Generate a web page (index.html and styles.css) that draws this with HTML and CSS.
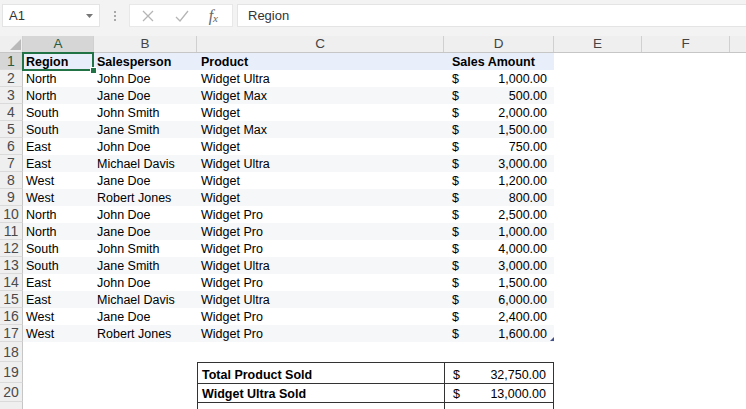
FILE: index.html
```html
<!DOCTYPE html>
<html>
<head>
<meta charset="utf-8">
<link rel="stylesheet" href="styles.css">
</head>
<body>
<div class="app">
  <div class="fbar">
    <div class="namebox"><span>A1</span>
      <svg class="caret" width="7" height="4" viewBox="0 0 7 4"><path d="M0 0h7L3.5 4z" fill="#777"/></svg>
    </div>
    <div class="grip"><i></i><i></i><i></i></div>
    <div class="fnbtns">
      <svg width="14" height="14" viewBox="0 0 14 14"><path d="M2 2l10 10M12 2L2 12" stroke="#b5b5b5" stroke-width="1.3" fill="none"/></svg>
      <svg width="16" height="14" viewBox="0 0 16 14"><path d="M2 8l4 4 8-10" stroke="#b5b5b5" stroke-width="1.3" fill="none"/></svg>
      <span class="fx">f<sub>x</sub></span>
    </div>
    <div class="formula">Region</div>
  </div>

  <div class="sheet">
    <div class="row hdr">
      <div class="corner"><svg width="11" height="11" viewBox="0 0 11 11"><path d="M11 0V11H0z" fill="#b9b9b9"/></svg></div>
      <div class="ch sel">A</div><div class="ch">B</div><div class="ch">C</div><div class="ch">D</div><div class="ch">E</div><div class="ch">F</div><div class="ch last"></div>
    </div>

    <div class="row head">
      <div class="rh sel">1</div>
      <div class="c b active">Region</div><div class="c b">Salesperson</div><div class="c c3 b">Product</div><div class="c d b"><span>Sales Amount</span></div>
    </div>
    <div class="row"><div class="rh">2</div><div class="c">North</div><div class="c">John Doe</div><div class="c c3">Widget Ultra</div><div class="c d"><span>$</span><span>1,000.00</span></div></div>
    <div class="row alt"><div class="rh">3</div><div class="c">North</div><div class="c">Jane Doe</div><div class="c c3">Widget Max</div><div class="c d"><span>$</span><span>500.00</span></div></div>
    <div class="row"><div class="rh">4</div><div class="c">South</div><div class="c">John Smith</div><div class="c c3">Widget</div><div class="c d"><span>$</span><span>2,000.00</span></div></div>
    <div class="row alt"><div class="rh">5</div><div class="c">South</div><div class="c">Jane Smith</div><div class="c c3">Widget Max</div><div class="c d"><span>$</span><span>1,500.00</span></div></div>
    <div class="row"><div class="rh">6</div><div class="c">East</div><div class="c">John Doe</div><div class="c c3">Widget</div><div class="c d"><span>$</span><span>750.00</span></div></div>
    <div class="row alt"><div class="rh">7</div><div class="c">East</div><div class="c">Michael Davis</div><div class="c c3">Widget Ultra</div><div class="c d"><span>$</span><span>3,000.00</span></div></div>
    <div class="row"><div class="rh">8</div><div class="c">West</div><div class="c">Jane Doe</div><div class="c c3">Widget</div><div class="c d"><span>$</span><span>1,200.00</span></div></div>
    <div class="row alt"><div class="rh">9</div><div class="c">West</div><div class="c">Robert Jones</div><div class="c c3">Widget</div><div class="c d"><span>$</span><span>800.00</span></div></div>
    <div class="row"><div class="rh">10</div><div class="c">North</div><div class="c">John Doe</div><div class="c c3">Widget Pro</div><div class="c d"><span>$</span><span>2,500.00</span></div></div>
    <div class="row alt"><div class="rh">11</div><div class="c">North</div><div class="c">Jane Doe</div><div class="c c3">Widget Pro</div><div class="c d"><span>$</span><span>1,000.00</span></div></div>
    <div class="row"><div class="rh">12</div><div class="c">South</div><div class="c">John Smith</div><div class="c c3">Widget Pro</div><div class="c d"><span>$</span><span>4,000.00</span></div></div>
    <div class="row alt"><div class="rh">13</div><div class="c">South</div><div class="c">Jane Smith</div><div class="c c3">Widget Ultra</div><div class="c d"><span>$</span><span>3,000.00</span></div></div>
    <div class="row"><div class="rh">14</div><div class="c">East</div><div class="c">John Doe</div><div class="c c3">Widget Pro</div><div class="c d"><span>$</span><span>1,500.00</span></div></div>
    <div class="row alt"><div class="rh">15</div><div class="c">East</div><div class="c">Michael Davis</div><div class="c c3">Widget Ultra</div><div class="c d"><span>$</span><span>6,000.00</span></div></div>
    <div class="row"><div class="rh">16</div><div class="c">West</div><div class="c">Jane Doe</div><div class="c c3">Widget Pro</div><div class="c d"><span>$</span><span>2,400.00</span></div></div>
    <div class="row alt"><div class="rh">17</div><div class="c">West</div><div class="c">Robert Jones</div><div class="c c3">Widget Pro</div><div class="c d qa"><span>$</span><span>1,600.00</span></div></div>

    <div class="row blank r18"><div class="rh">18</div></div>
    <div class="row blank r19"><div class="rh">19</div><div class="c"></div><div class="c"></div><div class="c c3 b tot">Total Product Sold</div><div class="c d tot totd"><span>$</span><span>32,750.00</span></div></div>
    <div class="row blank r20"><div class="rh">20</div><div class="c"></div><div class="c"></div><div class="c c3 b tot">Widget Ultra Sold</div><div class="c d tot totd"><span>$</span><span>13,000.00</span></div></div>
    <div class="row blank r21"><div class="rh"></div><div class="c"></div><div class="c"></div><div class="c c3 b tot"></div><div class="c d tot totd"><span class="peek">$</span></div></div>
  </div>
</div>
</body>
</html>
```

FILE: styles.css
```css
html, body {
  margin: 0;
  padding: 0;
  background: #ffffff;
  overflow: hidden;
}
.app {
  width: 746px;
  height: 409px;
  font-family: "Liberation Sans", Arial, sans-serif;
  overflow: hidden;
}
.fbar {
  height: 36px;
  box-sizing: border-box;
  background: #f3f3f3;
  display: flex;
  align-items: flex-start;
  padding-top: 4px;
}
.namebox {
  margin-left: 2px;
  width: 98px;
  height: 23px;
  box-sizing: border-box;
  background: #fff;
  border: 1px solid #e4e4e4;
  display: flex;
  align-items: center;
  justify-content: space-between;
  padding: 0 6px 0 6px;
  font-size: 13px;
  color: #333;
}
.caret { margin-top: 1px; }
.grip {
  width: 29px;
  height: 23px;
  display: flex;
  flex-direction: column;
  align-items: center;
  justify-content: center;
  gap: 2px;
}
.grip i {
  display: block;
  width: 2px;
  height: 2px;
  background: #a8a8a8;
}
.fnbtns {
  width: 104px;
  height: 23px;
  box-sizing: border-box;
  background: #fff;
  border: 1px solid #e8e8e8;
  display: flex;
  align-items: center;
  justify-content: space-between;
  padding: 0 14px 0 11px;
}
.fx {
  font-family: "Liberation Serif", "Times New Roman", serif;
  font-style: italic;
  font-size: 16px;
  color: #666;
  line-height: 1;
}
.fx sub {
  font-size: 11px;
  vertical-align: -1px;
}
.formula {
  flex: 1;
  margin-left: 4px;
  height: 23px;
  box-sizing: border-box;
  background: #fff;
  border: 1px solid #e4e4e4;
  border-right: none;
  display: flex;
  align-items: center;
  padding-left: 10px;
  font-size: 13px;
  color: #333;
}

.sheet {
  display: flex;
  flex-direction: column;
}
.row {
  display: grid;
  grid-template-columns: 23px 71px 103px 247px 110px 88px 88px 1fr;
  height: 17px;
  font-size: 12.5px;
  color: #000;
}
.hdr {
  height: 17px;
  background: #efefef;
  box-sizing: border-box;
  border-bottom: 1px solid #c6c6c6;
  font-size: 13.5px;
  color: #444;
}
.corner {
  display: flex;
  align-items: flex-end;
  justify-content: flex-end;
  padding: 0 1px 2px 0;
  border-right: 1px solid #d0d0d0;
}
.ch {
  display: flex;
  align-items: center;
  justify-content: center;
  border-right: 1px solid #d0d0d0;
  line-height: 1;
}
.ch.sel {
  background: #d6d6d6;
  color: #2a5a3e;
}
.ch.last { border-right: none; }

.rh {
  background: #efefef;
  box-sizing: border-box;
  border-bottom: 1px solid #dadada;
  border-right: 1px solid #c6c6c6;
  display: flex;
  align-items: center;
  justify-content: center;
  font-size: 14px;
  color: #4a4a4a;
}
.rh.sel { background: #d6d6d6; color: #2a5a3e; }

.c {
  display: flex;
  align-items: center;
  padding-left: 3px;
  white-space: nowrap;
  position: relative;
}
.c3 { padding-left: 4px; }
.d {
  justify-content: space-between;
  padding: 0 7px 0 8px;
}
.b { font-weight: bold; }

.head .c { background: #e9effa; }
.head .d { justify-content: flex-start; }
.alt .c { background: #f6f7f9; }

.active::after {
  content: "";
  position: absolute;
  left: -1px;
  top: -1px;
  right: 0;
  bottom: -1px;
  border: 2px solid #217346;
  pointer-events: none;
}
.active::before {
  content: "";
  position: absolute;
  right: -3px;
  bottom: -4px;
  width: 5px;
  height: 5px;
  background: #217346;
  border: 1px solid #fff;
  z-index: 2;
}
.qa::after {
  content: "";
  position: absolute;
  right: 0;
  bottom: 1px;
  width: 4px;
  height: 4px;
  background: #44508a;
  clip-path: polygon(100% 0, 100% 100%, 0 100%);
}

.r18 { height: 20px; }
.r19 { height: 21px; }
.r20 { height: 19px; }
.r21 { height: 24px; }
.r19 .c, .r20 .c {
  align-items: flex-end;
  padding-bottom: 1px;
  line-height: 14px;
}
.r21 .c {
  align-items: flex-start;
  padding-top: 4px;
}
.peek { line-height: 14px; }
.tot {
  border-top: 1px solid #333;
  border-left: 1px solid #333;
}
.totd { border-right: 1px solid #333; }
```
